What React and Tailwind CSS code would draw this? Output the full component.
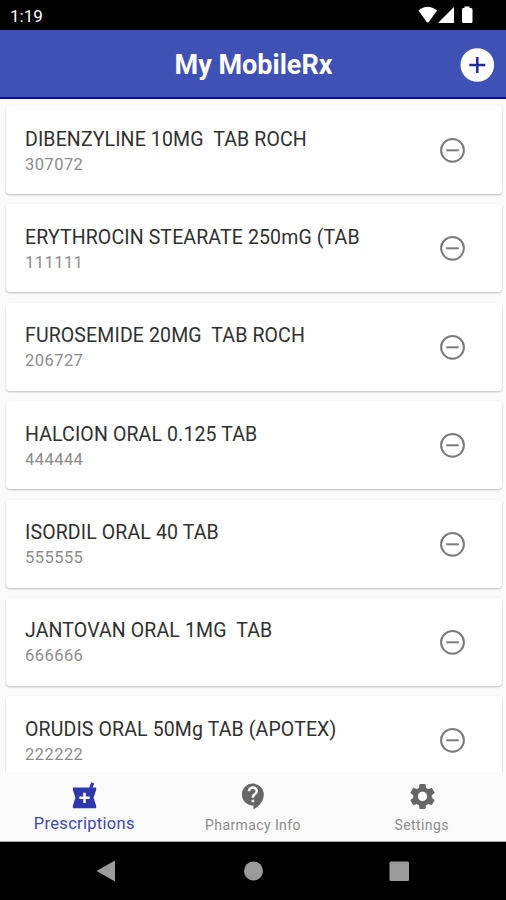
import { MdContactSupport, MdLocalPharmacy, MdSettings } from "react-icons/md";

const prescriptions = [
  { name: "DIBENZYLINE 10MG  TAB ROCH", number: "307072" },
  { name: "ERYTHROCIN STEARATE 250mG (TAB", number: "111111" },
  { name: "FUROSEMIDE 20MG  TAB ROCH", number: "206727" },
  { name: "HALCION ORAL 0.125 TAB", number: "444444" },
  { name: "ISORDIL ORAL 40 TAB", number: "555555" },
  { name: "JANTOVAN ORAL 1MG  TAB", number: "666666" },
  { name: "ORUDIS ORAL 50Mg TAB (APOTEX)", number: "222222" },
];

function StatusBar() {
  return (
    <div className="flex h-[30px] shrink-0 items-center justify-between bg-black pl-[10px] pr-[29px] text-white">
      <span className="pt-[3px] text-[17px] leading-none">1:19</span>
      <svg className="h-[30px] w-[60px]" viewBox="0 0 60 30" fill="currentColor">
        <path d="M1.500 10.500Q10.500 3 20 10.500L11.500 22.500H10Z" />
        <path d="M37 7V23H21Z" />
        <path d="M46 8h1.500V6.500h5V8H54q1.500 0 1.500 1.500v12q0 1.500-1.500 1.500h-7.500q-1.500 0-1.500-1.500v-12q0-1.500 1-1.500Z" />
      </svg>
    </div>
  );
}

function Header() {
  return (
    <header className="grid h-[69px] shrink-0 grid-cols-[1fr_auto_1fr] items-center border-b-2 border-[#0a0a9c] bg-[#3f51b5]">
      <h1 className="col-start-2 pl-px pt-[3px] text-[27px] font-bold leading-none text-white">My MobileRx</h1>
      <button className="mr-[9px] mt-[2px] justify-self-end">
        <svg className="size-[40px]" viewBox="0 0 40 40" fill="none">
          <circle cx="20.300" cy="20" r="16.800" fill="white" />
          <path d="M20.300 12v16M12.300 20h16" stroke="#1f2a9c" strokeWidth="2.500" />
        </svg>
      </button>
    </header>
  );
}

function PrescriptionCard({ name, number }) {
  return (
    <li className="flex h-[88px] shrink-0 items-center justify-between rounded-[4px] bg-white pl-[19px] pr-[34px] shadow-[0_1px_2px_rgba(0,0,0,0.25)]">
      <div className="pt-[3px]">
        <div className="whitespace-pre text-[19.5px] leading-[25px] tracking-[0.13px] text-[#303030]">{name}</div>
        <div className="text-[16.5px] leading-[25px] tracking-[0.45px] text-[#8c8c8c]">{number}</div>
      </div>
      <svg className="size-[30px]" viewBox="0 0 30 30" fill="none" stroke="#7a7a7a" strokeWidth="2">
        <circle cx="14.500" cy="15.300" r="11.400" />
        <path d="M8.300 15.300h12.400" />
      </svg>
    </li>
  );
}

function Tab({ Icon, label, active }) {
  return (
    <div
      className={
        active
          ? "flex flex-1 flex-col items-center pt-[9px] text-[#2c38ac]"
          : "flex flex-1 flex-col items-center pt-[9px] text-[#666]"
      }
    >
      <Icon className="ml-px size-[31px]" />
      <span
        className={
          active
            ? "pt-px text-[16.5px] leading-[22px] tracking-[0.3px] text-[#3c48b4]"
            : "pt-[2px] text-[14px] leading-[22px] tracking-[0.4px] text-[#8c8c8c]"
        }
      >
        {label}
      </span>
    </div>
  );
}

function SystemNav() {
  return (
    <div className="h-[58px] shrink-0 bg-black text-[#9b9b9b]">
      <svg className="h-[58px] w-full" viewBox="0 0 506 58" fill="currentColor">
        <path d="M96.500 29L115 18.500V39.500Z" />
        <circle cx="253.500" cy="29" r="9.500" />
        <rect x="389.500" y="19.500" width="19.500" height="19.500" rx="1.500" />
      </svg>
    </div>
  );
}

export default function App() {
  return (
    <div className="flex h-[900px] w-[506px] flex-col overflow-hidden bg-[#fafafa] font-[Roboto,sans-serif]">
      <StatusBar />
      <Header />
      <ul className="flex min-h-0 flex-1 flex-col gap-[10.4px] overflow-hidden pl-[6px] pr-[4px] pt-[7px]">
        {prescriptions.map((item) => (
          <PrescriptionCard key={item.number} {...item} />
        ))}
      </ul>
      <nav className="flex h-[70px] shrink-0 border-b border-[#aaa] bg-[#fafafa]">
        <Tab Icon={MdLocalPharmacy} label="Prescriptions" active />
        <Tab Icon={MdContactSupport} label="Pharmacy Info" />
        <Tab Icon={MdSettings} label="Settings" />
      </nav>
      <SystemNav />
    </div>
  );
}
